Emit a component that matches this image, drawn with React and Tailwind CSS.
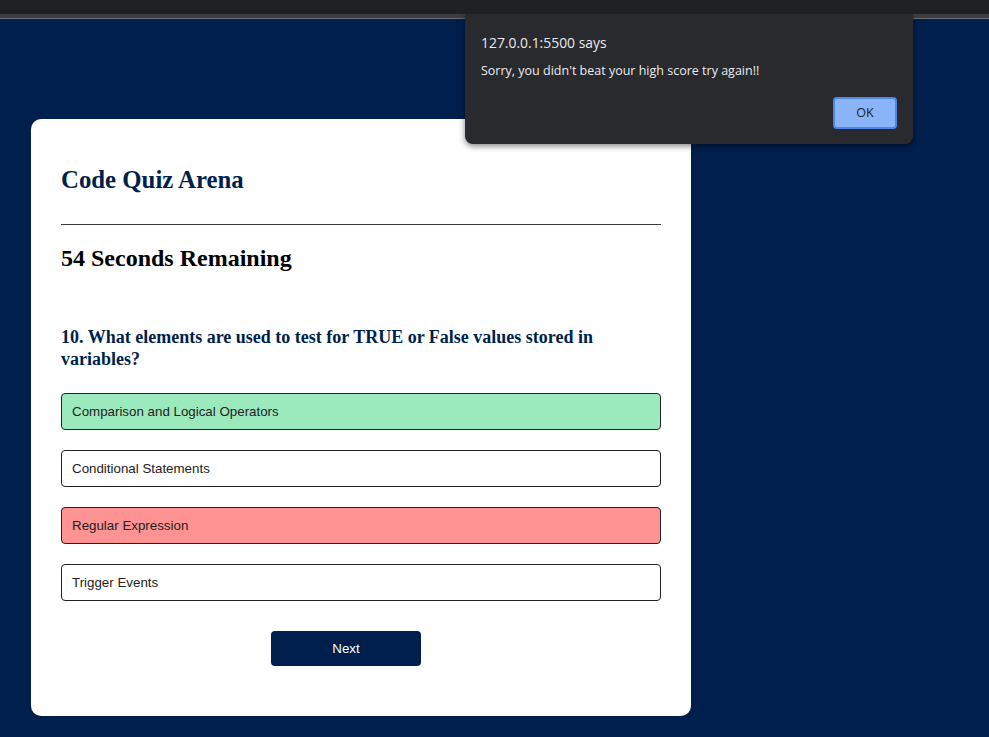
import React from "react";

const options = [
  { text: "Comparison and Logical Operators", cls: "bg-[#9beabd]" },
  { text: "Conditional Statements", cls: "bg-white" },
  { text: "Regular Expression", cls: "bg-[#ff9393]" },
  { text: "Trigger Events", cls: "bg-white" },
];

export default function App() {
  return (
    <div className="relative w-[989px] h-[737px] overflow-hidden bg-[#001f4d] flex flex-col">
      <div className="h-[14px] bg-[#202124]" />
      <div className="h-[4px] bg-[#3c3d40]" />
      <div className="h-px bg-[#6b6d70]" />
      <div className="flex-1 pt-[100px] pl-[31px]">
        <div
          className="w-[660px] h-[597px] bg-white rounded-[10px] px-[30px] pt-[47px] flex flex-col"
          style={{ fontFamily: '"Liberation Serif", "Times New Roman", serif' }}
        >
          <div className="text-[24.8px] leading-[28px] font-bold text-[#001f4d]">
            Code Quiz Arena
          </div>
          <div className="mt-[30px] h-px bg-[#3a3a3a]" />
          <div className="mt-[19px] text-[24px] leading-[28px] font-bold text-black">
            54 Seconds Remaining
          </div>
          <div className="mt-[54px] text-[18px] leading-[22px] font-bold text-[#001f4d]">
            10. What elements are used to test for TRUE or False values stored in variables?
          </div>
          <div
            className="mt-[23px] flex flex-col gap-[20px]"
            style={{ fontFamily: '"Liberation Sans", Arial, sans-serif' }}
          >
            {options.map((o) => (
              <div
                key={o.text}
                className={`h-[37px] border border-[#222] rounded-[4px] flex items-center pl-[10px] text-[13.33px] text-[#222] ${o.cls}`}
              >
                {o.text}
              </div>
            ))}
          </div>
          <div className="mt-[30px] flex pl-[210px]">
            <div
              className="w-[150px] h-[35px] bg-[#001f4d] rounded-[4px] flex items-center justify-center text-white text-[13.33px]"
              style={{ fontFamily: '"Liberation Sans", Arial, sans-serif' }}
            >
              Next
            </div>
          </div>
        </div>
      </div>

      <div
        className="absolute left-[465px] top-[14px] w-[448px] h-[130px] bg-[#292a2d] rounded-b-[8px] shadow-[0_2px_6px_rgba(0,0,0,0.5)] px-[16px] pt-[19px]"
        style={{ fontFamily: '"Open Sans", "Noto Sans", sans-serif' }}
      >
        <div className="text-[13.9px] leading-[20px] text-[#e8eaed]">127.0.0.1:5500 says</div>
        <div className="mt-[9px] text-[12.5px] leading-[18px] text-[#e8eaed]">
          Sorry, you didn't beat your high score try again!!
        </div>
        <div className="absolute right-[16px] top-[83px] w-[64px] h-[32px] rounded-[4px] border-2 border-[#4f86ec] bg-[#8ab4f8] flex items-center justify-center text-[12.5px] text-[#202124]">
          OK
        </div>
      </div>
    </div>
  );
}
